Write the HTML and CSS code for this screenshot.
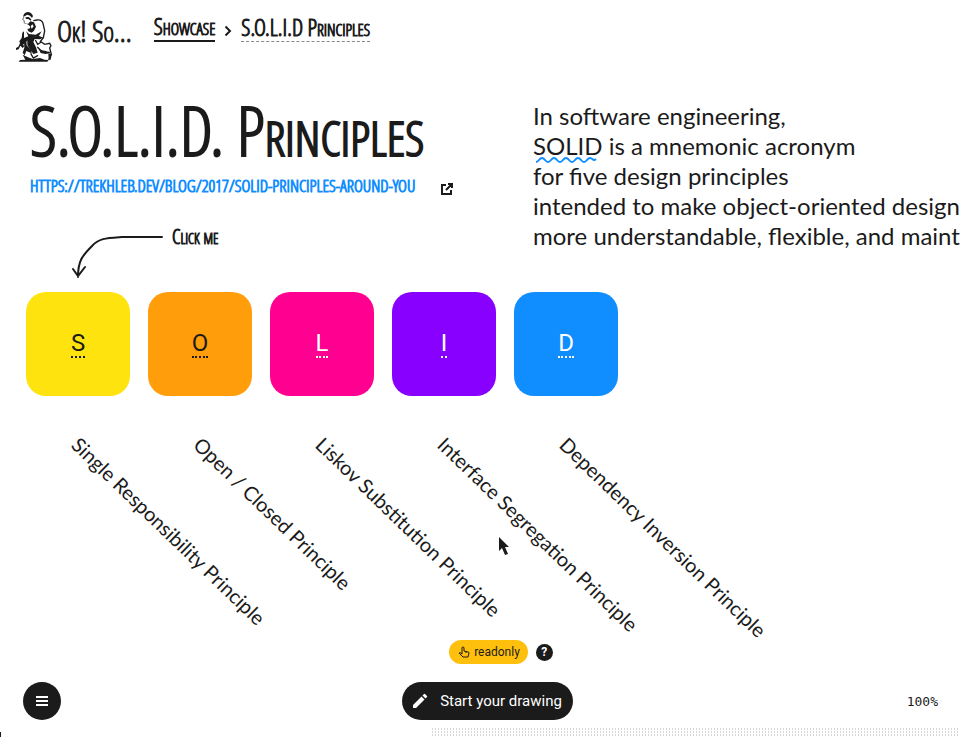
FILE: index.html
```html
<!DOCTYPE html>
<html lang="en">
<head>
<meta charset="utf-8">
<meta name="viewport" content="width=device-width, initial-scale=1">
<title>S.O.L.I.D Principles</title>
<link rel="stylesheet" href="styles.css">
</head>
<body>
<div class="app">
  <header class="header">
    <a class="brand" href="#">
      <svg class="brand-logo" viewBox="0 0 108 150" aria-hidden="true">
        <path class="ink" d="M21 14Q24 1 35 0Q46 0 51 12L48 18 42 11 34 8 27 12ZM28 16L38 15 46 22 44 26 37 21 30 21Z"/>
        <path class="line thin" d="M24 14L20 23 25 26 24 32 29 35"/>
        <path class="line" d="M52 26L63 24Q77 22 81 34L86 56 82 77 72 90"/>
        <path class="ink" d="M28 33L36 36 43 28 54 31 60 44 54 56 47 62 37 58 34 50 40 50 43 45 39 40ZM49 37L44 43 47 50 53 43Z"/>
        <path class="ink" d="M30 58L39 66 59 68 77 58 69 71 48 76 33 87 21 98 25 103 20 108 13 101 8 112 0 114 0 108 7 104 12 94 10 88 17 78 19 62 24 58 24 78 37 73Z"/>
        <path class="ink" d="M46 74L68 71 82 77 72 82 56 81 52 90 60 106 65 122 52 126 43 113 34 99 34 84Z"/>
        <path class="ink" d="M24 86L31 86 32 100 46 115 47 124 31 117 26 130 20 122 25 107Z"/>
        <path class="line" d="M58 84L65 97 76 90 86 97 101 94 105 101 101 108 106 127 98 144M64 105L76 117 91 119M44 124L52 138 66 130"/>
        <path class="ink" d="M20 128L36 136 50 141 72 138 86 143 98 144 94 149 8 149 12 144 28 143ZM68 111L82 117 101 119 103 124 88 126 74 123ZM97 125L107 126 104 144 98 141Z"/>
      </svg>
      <span>Ok! So...</span>
    </a>
    <nav class="crumbs" aria-label="Breadcrumb">
      <a class="crumb" href="#">Showcase</a>
      <svg class="crumb-sep" viewBox="0 0 8 12" aria-hidden="true"><path d="M1.5 1.5 6 6 1.5 10.5"/></svg>
      <a class="crumb crumb-current" href="#" aria-current="page">S.O.L.I.D Principles</a>
    </nav>
  </header>

  <main class="board">
    <section class="intro">
      <h1 class="title">S.O.L.I.D. Principles</h1>
      <a class="source" href="https://trekhleb.dev/blog/2017/solid-principles-around-you">
        <span>https://trekhleb.dev/blog/2017/solid-principles-around-you</span>
        <svg class="source-icon" viewBox="0 0 12 12" aria-hidden="true"><path d="M5 2H1V11H10V7M7 1H11V5M11 1 5 7"/></svg>
      </a>
      <div class="hint">
        <svg class="hint-arrow" viewBox="0 0 94 46" aria-hidden="true"><path d="M92 5H52C37 6 29 6 22 14C12 24 8 29 8 45M3 37 8 44 15 35"/></svg>
        <span>Click me</span>
      </div>
    </section>

    <p class="summary">In software engineering,<br><span class="wavy">SOLID<svg class="wave" viewBox="0 0 62 8" aria-hidden="true"><path d="M1 6C4 6 4 2 7 2S10 6 13 6 16 2 19 2 22 6 25 6 28 2 31 2 34 6 37 6 40 2 43 2 46 6 49 6 52 2 55 2 58 6 61 3"/></svg></span> is a mnemonic acronym<br>for five design principles<br>intended to make object-oriented designs<br>more understandable, flexible, and maintainable</p>

    <ul class="principles">
      <li class="principle"><a class="tile yellow" href="#"><span>S</span></a><span class="label">Single Responsibility Principle</span></li>
      <li class="principle"><a class="tile orange" href="#"><span>O</span></a><span class="label">Open / Closed Principle</span></li>
      <li class="principle"><a class="tile pink" href="#"><span>L</span></a><span class="label">Liskov Substitution Principle</span></li>
      <li class="principle"><a class="tile violet" href="#"><span>I</span></a><span class="label">Interface Segregation Principle</span></li>
      <li class="principle"><a class="tile blue" href="#"><span>D</span></a><span class="label">Dependency Inversion Principle</span></li>
    </ul>
    <svg class="cursor" viewBox="0 0 12 20" aria-hidden="true"><path d="M1 1V15L4 12 7 19 10 18 7 11H11Z"/></svg>
  </main>

  <footer class="footer">
    <div class="status">
      <span class="badge">
        <svg viewBox="0 0 12 12" aria-hidden="true"><path d="M4 8V2Q4 1 5 1T6 2V5L10 6Q11 6 11 7L10 11H5L1 7Q2 6 4 8M8 6V7"/></svg>
        readonly
      </span>
      <button class="help" type="button" aria-label="Help">?</button>
    </div>
    <div class="toolbar">
      <button class="menu" type="button" aria-label="Menu">
        <svg viewBox="0 0 12 10" aria-hidden="true"><path d="M0 1H12M0 5H12M0 9H12"/></svg>
      </button>
      <button class="start" type="button">
        <svg viewBox="0 0 16 16" aria-hidden="true"><path d="M1 12 9.500 3.500 12.500 6.500 4 15H1ZM10.500 2.500 12 1Q12.500.5 13 1L15 3Q15.500 3.500 15 4L13.500 5.500Z"/></svg>
        Start your drawing
      </button>
      <output class="zoom">100%</output>
    </div>
  </footer>
</div>
</body>
</html>
```
FILE: styles.css
```css
* { box-sizing: border-box; }

:root {
  --ink: #1b1b1b;
  --blue: #108eff;
  --display: "Open Sans Condensed Light", "Open Sans Condensed", "Liberation Sans Narrow", sans-serif;
  --hand: Lato, "Open Sans", sans-serif;
}

body {
  margin: 0;
  background: #fff;
  color: var(--ink);
  font-family: Roboto, sans-serif;
}

a { color: inherit; text-decoration: none; }
button { border: 0; padding: 0; font: inherit; cursor: pointer; }
svg { display: block; flex: none; fill: none; stroke: currentColor; }

.app {
  display: flex;
  flex-direction: column;
  min-height: 100vh;
  overflow: hidden;
}

.header {
  display: flex;
  align-items: flex-start;
  gap: 22px;
  padding: 12px 16px 0;
  font-family: var(--display);
  font-variant: small-caps;
  white-space: nowrap;
  -webkit-text-stroke: 1px currentColor;
}

.brand { display: flex; gap: 5px; font-size: 29px; line-height: 38px; }
.brand-logo { width: 36px; height: 50px; }
.brand-logo .ink { fill: var(--ink); fill-rule: evenodd; stroke: none; }
.brand-logo .line { stroke-width: 4; }
.brand-logo .thin { stroke-width: 2; }

.crumbs { display: flex; align-items: center; gap: 9px; font-size: 23px; }
.crumb { line-height: 28px; border-bottom: 2px solid var(--ink); }
.crumb-current { border-bottom: 1px dashed #888; }
.crumb-sep { width: 8px; height: 12px; margin-top: 8px; stroke-width: 2; }

.board {
  position: relative;
  flex: 1;
  display: grid;
  grid-template-columns: 507fr 427fr;
  align-content: start;
  padding: 34px 0 0 26px;
}

.intro { min-width: 0; padding-left: 4px; font-family: var(--display); white-space: nowrap; }
.title { margin: 0 0 8px; font-size: 68px; line-height: 68px; font-weight: 400; font-variant: small-caps; -webkit-text-stroke: 2px currentColor; }
.source { display: flex; align-items: center; gap: 26px; font-size: 17px; line-height: 28px; color: var(--blue); text-transform: uppercase; -webkit-text-stroke: 1px currentColor; }
.source-icon { width: 12px; height: 12px; margin-top: 6px; color: var(--ink); stroke-width: 2; }
.hint { display: flex; gap: 8px; padding: 32px 0 0 40px; font-size: 20px; line-height: 10px; font-variant: small-caps; -webkit-text-stroke: 1px currentColor; }
.hint-arrow { width: 94px; height: 46px; stroke-width: 2; stroke-linecap: round; }

.summary {
  min-width: 0;
  margin: 5px 0 0;
  font-family: var(--hand);
  font-size: 24px;
  line-height: 30px;
  white-space: nowrap;
}
.wavy { position: relative; }
.wave { position: absolute; left: 2px; bottom: -4px; width: 62px; height: 8px; color: var(--blue); stroke-width: 2; }

.principles {
  grid-column: 1 / -1;
  display: flex;
  gap: 18px;
  margin: 14px 0 0;
  padding: 0;
  list-style: none;
}
.principle { width: 104px; }
.tile {
  display: flex;
  align-items: center;
  justify-content: center;
  aspect-ratio: 1;
  border-radius: 20px;
  font-size: 24px;
  line-height: 26px;
}
.tile span { border-bottom: 2px dotted currentColor; }
.yellow { background: #ffe30f; }
.orange { background: #ff9d0a; }
.pink { background: #ff0090; color: #fff; }
.violet { background: #8800ff; color: #fff; }
.blue { background: #108eff; color: #fff; }

.label {
  display: block;
  width: max-content;
  margin: 36px 0 0 58px;
  font-family: var(--hand);
  font-size: 20px;
  line-height: 24px;
  transform: rotate(44deg);
  transform-origin: left top;
}

.cursor { position: absolute; left: 498px; top: 474px; width: 12px; height: 20px; fill: var(--ink); stroke: none; }

.footer {
  position: relative;
  display: flex;
  flex-direction: column;
  gap: 18px;
  padding: 0 22px 17px;
  background: linear-gradient(var(--ink), var(--ink)) left bottom / 1px 5px no-repeat;
}
.footer::after {
  content: "";
  position: absolute;
  right: 0;
  bottom: 0;
  width: 55%;
  height: 9px;
  background: conic-gradient(transparent 75%, #aaa 0) 0 0 / 3px 3px;
  opacity: .5;
}

.status { display: flex; justify-content: center; align-items: center; gap: 8px; padding-left: 42px; }
.badge {
  display: flex;
  align-items: center;
  gap: 4px;
  padding: 0 8px 0 9px;
  border-radius: 12px;
  background: #ffc00d;
  font-size: 12px;
  line-height: 24px;
}
.badge svg { width: 12px; height: 12px; }
.help { width: 17px; height: 17px; border-radius: 50%; background: var(--ink); color: #fff; font-size: 12px; font-weight: 700; line-height: 17px; }

.toolbar { display: grid; grid-template-columns: 1fr auto 1fr; align-items: center; padding-left: 1px; }
.menu, .start { display: flex; align-items: center; justify-content: center; height: 38px; border-radius: 19px; background: var(--ink); color: #fff; }
.menu { width: 38px; }
.menu svg { width: 12px; height: 10px; stroke-width: 2; }
.start { gap: 12px; margin-left: 14px; padding: 0 11px 0 10px; font-size: 15px; }
.start svg { width: 16px; height: 16px; fill: currentColor; stroke: none; }
.zoom { justify-self: end; font: 13px "DejaVu Sans Mono", monospace; }
```
